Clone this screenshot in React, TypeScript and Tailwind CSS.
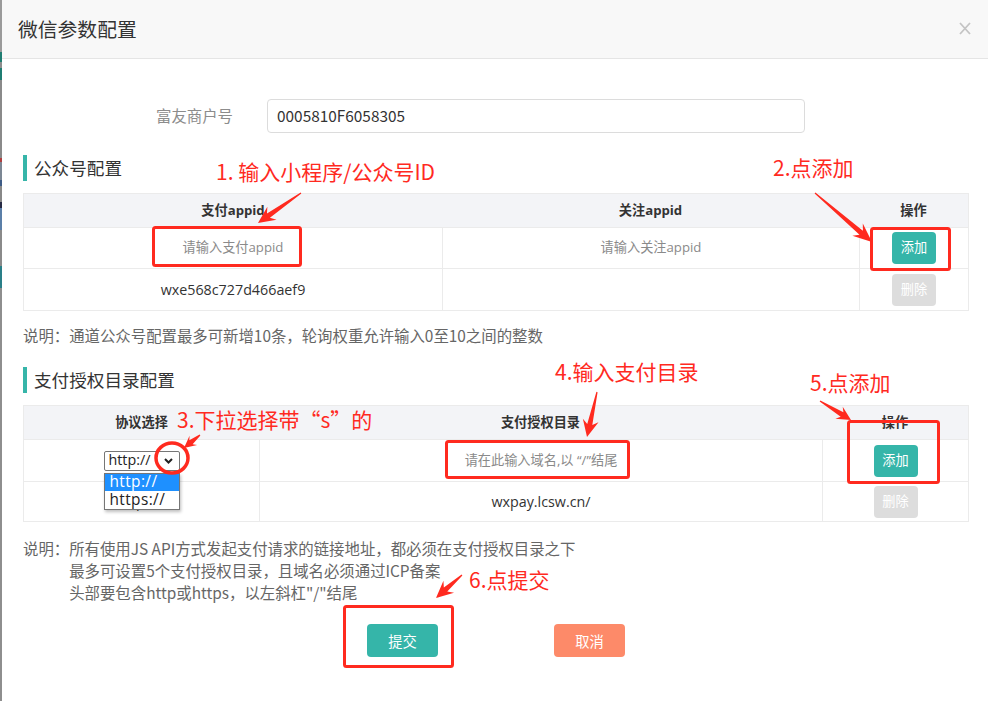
import React from 'react';

const RED = '#ff2a1f';

type Pt = { x1: number; y1: number; x2: number; y2: number; head?: number; wing?: number };

// tapered red arrow, thin at the tail, with a barbed head at (x2, y2)
function Arrow({ x1, y1, x2, y2, head = 17, wing = 8 }: Pt) {
  const dx = x2 - x1;
  const dy = y2 - y1;
  const len = Math.hypot(dx, dy);
  const ux = dx / len;
  const uy = dy / len;
  const nx = -uy;
  const ny = ux;
  const bx = x2 - ux * head;
  const by = y2 - uy * head;
  const nb = x2 - ux * head * 0.75;
  const nby = y2 - uy * head * 0.75;
  const pts = [
    [x1 + nx * 0.6, y1 + ny * 0.6],
    [nb + nx * 2.6, nby + ny * 2.6],
    [bx + nx * wing, by + ny * wing],
    [x2, y2],
    [bx - nx * wing, by - ny * wing],
    [nb - nx * 2.6, nby - ny * 2.6],
    [x1 - nx * 0.6, y1 - ny * 0.6],
  ]
    .map(p => p.join(','))
    .join(' ');
  return <polygon points={pts} fill={RED} />;
}

const strip = [
  { h: 52, c: '#9a9a9a' },
  { h: 10, c: '#1f7d72' },
  { h: 6, c: '#8d8d8d' },
  { h: 12, c: '#1f7d72' },
  { h: 78, c: '#8a8a8a' },
  { h: 4, c: '#b04040' },
  { h: 18, c: '#7c8794' },
  { h: 6, c: '#3e5c86' },
  { h: 16, c: '#888888' },
  { h: 6, c: '#262a44' },
  { h: 22, c: '#5b7fa8' },
  { h: 36, c: '#8a8a8a' },
  { h: 22, c: '#2a7f88' },
  { h: 413, c: '#8e8e8e' },
];

function SectionTitle({ children, className }: { children: React.ReactNode; className: string }) {
  return (
    <div className={`flex h-[26px] items-center ${className}`}>
      <span className="h-full w-[4px] bg-[#36b5a9]" />
      <span className="ml-[7px] text-[17.6px] leading-none text-[#333]">{children}</span>
    </div>
  );
}

function AddButton() {
  return (
    <button
      type="button"
      className="flex h-[32px] w-[44px] items-center justify-center rounded-[4px] bg-[#35b5a9] text-[13.2px] text-white"
    >
      添加
    </button>
  );
}

function DeleteButton() {
  return (
    <button
      type="button"
      className="flex h-[32px] w-[44px] items-center justify-center rounded-[4px] bg-[#dddddd] text-[13.2px] text-white"
    >
      删除
    </button>
  );
}

export default function App() {
  return (
    <div className="relative flex h-[701px] w-[988px] overflow-hidden bg-white font-['Noto_Sans_CJK_SC',sans-serif]">
      <div className="flex w-[2px] shrink-0 flex-col">
        {strip.map((s, i) => (
          <div key={i} className="w-full" style={{ height: s.h, background: s.c }} />
        ))}
      </div>

      <div className="flex flex-1 flex-col">
        <header className="flex h-[59px] shrink-0 items-center justify-between border-b border-[#e5e5e5] bg-[#f8f8f8] pl-[16px] pr-[17px]">
          <h1 className="text-[19.8px] font-normal leading-none text-[#333]">微信参数配置</h1>
          <svg width="12" height="13" viewBox="0 0 12 13" className="mt-[-2px]">
            <path d="M1 1 L11 12 M11 1 L1 12" stroke="#c4c4c4" strokeWidth="1.8" />
          </svg>
        </header>

        <div className="flex flex-col pl-[21px] pr-[19px]">
          <div className="mt-[40px] flex items-center">
            <label className="w-[210px] text-right text-[15.4px] leading-none text-[#8c8c8c]">富友商户号</label>
            <div className="ml-[34px] flex h-[34px] w-[538px] items-center rounded-[4px] border border-[#dcdcdc] px-[9px] text-[15.4px] text-[#333]">
              0005810F6058305
            </div>
          </div>

          <SectionTitle className="mt-[22px]">公众号配置</SectionTitle>

          <div className="mt-[12px] border border-[#ebebeb] font-['Open_Sans','Noto_Sans_CJK_SC',sans-serif]">
            <div className="grid h-[33px] grid-cols-[418px_417px_109px] bg-[#f3f4f7] text-[13.2px] font-bold text-[#333]">
              <div className="flex items-center justify-center">支付appid</div>
              <div className="flex items-center justify-center">关注appid</div>
              <div className="flex items-center justify-center">操作</div>
            </div>
            <div className="grid h-[41px] grid-cols-[418px_417px_109px] border-t border-[#ebebeb]">
              <div className="flex items-center justify-center text-[13.2px] text-[#8a8a8a]">请输入支付appid</div>
              <div className="flex items-center justify-center border-l border-[#ebebeb] text-[13.2px] text-[#8a8a8a]">
                请输入关注appid
              </div>
              <div className="flex items-center justify-center border-l border-[#ebebeb]">
                <AddButton />
              </div>
            </div>
            <div className="grid h-[42px] grid-cols-[418px_417px_109px] border-t border-[#ebebeb]">
              <div className="flex items-center justify-center text-[14.3px] text-[#333]">wxe568c727d466aef9</div>
              <div className="border-l border-[#ebebeb]" />
              <div className="flex items-center justify-center border-l border-[#ebebeb]">
                <DeleteButton />
              </div>
            </div>
          </div>

          <p className="mt-[13px] text-[15.4px] leading-[22px] text-[#666]">
            说明：通道公众号配置最多可新增10条，轮询权重允许输入0至10之间的整数
          </p>

          <SectionTitle className="mt-[21px]">支付授权目录配置</SectionTitle>

          <div className="mt-[12px] border border-[#ebebeb] font-['Open_Sans','Noto_Sans_CJK_SC',sans-serif]">
            <div className="grid h-[33px] grid-cols-[235px_563px_146px] bg-[#f3f4f7] text-[13.2px] font-bold text-[#333]">
              <div className="flex items-center justify-center">协议选择</div>
              <div className="flex items-center justify-center">支付授权目录</div>
              <div className="flex items-center justify-center">操作</div>
            </div>
            <div className="grid h-[42px] grid-cols-[235px_563px_146px] border-t border-[#ebebeb]">
              <div className="flex items-center justify-center">
                <div className="relative z-10">
                  <div className="flex h-[20px] w-[76px] items-center justify-between rounded-[2px] border border-[#767676] bg-white pl-[4px] pr-[6px] text-[14.3px] leading-none text-[#222]">
                    <span>http://</span>
                    <svg width="9" height="6" viewBox="0 0 9 6">
                      <path d="M1 1 L4.5 4.5 L8 1" fill="none" stroke="#222" strokeWidth="2" />
                    </svg>
                  </div>
                  <div className="absolute left-0 top-[22px] w-[76px] border border-[#767676] bg-white text-[15.4px] leading-none shadow-[1px_2px_3px_rgba(0,0,0,0.25)]">
                    <div className="flex h-[17px] items-center bg-[#1e90ff] pl-[5px] tracking-[0.4px] text-white">http://</div>
                    <div className="flex h-[18px] items-center pl-[5px] tracking-[0.4px] text-[#222]">https://</div>
                  </div>
                </div>
              </div>
              <div className="flex items-center justify-center border-l border-[#ebebeb] text-[13.2px] text-[#8a8a8a]">
                请在此输入域名,以 “/”结尾
              </div>
              <div className="flex items-center justify-center border-l border-[#ebebeb]">
                <AddButton />
              </div>
            </div>
            <div className="grid h-[40px] grid-cols-[235px_563px_146px] border-t border-[#ebebeb]">
              <div className="flex items-center justify-center text-[14.3px] text-[#333]">https://</div>
              <div className="flex items-center justify-center border-l border-[#ebebeb] text-[14.3px] text-[#333]">
                wxpay.lcsw.cn/
              </div>
              <div className="flex items-center justify-center border-l border-[#ebebeb]">
                <DeleteButton />
              </div>
            </div>
          </div>

          <div className="mt-[15px] flex text-[15.4px] leading-[22px] text-[#666]">
            <span>说明：</span>
            <div className="flex flex-col">
              <span>所有使用JS API方式发起支付请求的链接地址，都必须在支付授权目录之下</span>
              <span>最多可设置5个支付授权目录，且域名必须通过ICP备案</span>
              <span>头部要包含http或https，以左斜杠"/"结尾</span>
            </div>
          </div>

          <div className="mt-[21px] flex justify-center gap-[116px]">
            <button
              type="button"
              className="flex h-[33px] w-[71px] items-center justify-center rounded-[4px] bg-[#35b5a9] text-[14.3px] text-white"
            >
              提交
            </button>
            <button
              type="button"
              className="flex h-[33px] w-[71px] items-center justify-center rounded-[4px] bg-[#fd8a69] text-[14.3px] text-white"
            >
              取消
            </button>
          </div>
        </div>
      </div>

      {/* hand-drawn annotations over the dialog */}
      <svg className="pointer-events-none absolute left-0 top-0 z-20" width="988" height="701" viewBox="0 0 988 701">
        <g fill="none" stroke={RED} strokeWidth="3">
          <rect x="153.5" y="227.5" width="147" height="38" rx="2" />
          <rect x="871.5" y="228.5" width="78" height="41" rx="2" />
          <rect x="446.5" y="441.5" width="182" height="36" rx="2" />
          <rect x="848.5" y="421.5" width="90" height="61" rx="2" />
          <rect x="344.5" y="606.5" width="108" height="60" rx="2" />
          <ellipse cx="172" cy="458" rx="16" ry="15" strokeWidth="3.5" />
        </g>
        <Arrow x1={301} y1={193} x2={258} y2={223} />
        <Arrow x1={815} y1={193} x2={872} y2={242} head={19} />
        <Arrow x1={200} y1={435} x2={184} y2={448} head={12} wing={6} />
        <Arrow x1={597} y1={392} x2={587} y2={437} />
        <Arrow x1={820} y1={401} x2={851} y2={420} head={14} wing={7} />
        <Arrow x1={462} y1={575} x2={436} y2={598} />
      </svg>

      <span className="pointer-events-none absolute left-[216px] top-[161px] z-30 whitespace-nowrap text-[21px] leading-none text-[#ff2a1f]">
        1. 输入小程序/公众号ID
      </span>
      <span className="pointer-events-none absolute left-[773px] top-[157px] z-30 whitespace-nowrap text-[21px] leading-none text-[#ff2a1f]">
        2.点添加
      </span>
      <span className="pointer-events-none absolute left-[177px] top-[409px] z-30 whitespace-nowrap text-[21px] leading-none text-[#ff2a1f]">
        3.下拉选择带“s”的
      </span>
      <span className="pointer-events-none absolute left-[555px] top-[361px] z-30 whitespace-nowrap text-[21px] leading-none text-[#ff2a1f]">
        4.输入支付目录
      </span>
      <span className="pointer-events-none absolute left-[810px] top-[372px] z-30 whitespace-nowrap text-[21px] leading-none text-[#ff2a1f]">
        5.点添加
      </span>
      <span className="pointer-events-none absolute left-[469px] top-[569px] z-30 whitespace-nowrap text-[21px] leading-none text-[#ff2a1f]">
        6.点提交
      </span>
    </div>
  );
}
